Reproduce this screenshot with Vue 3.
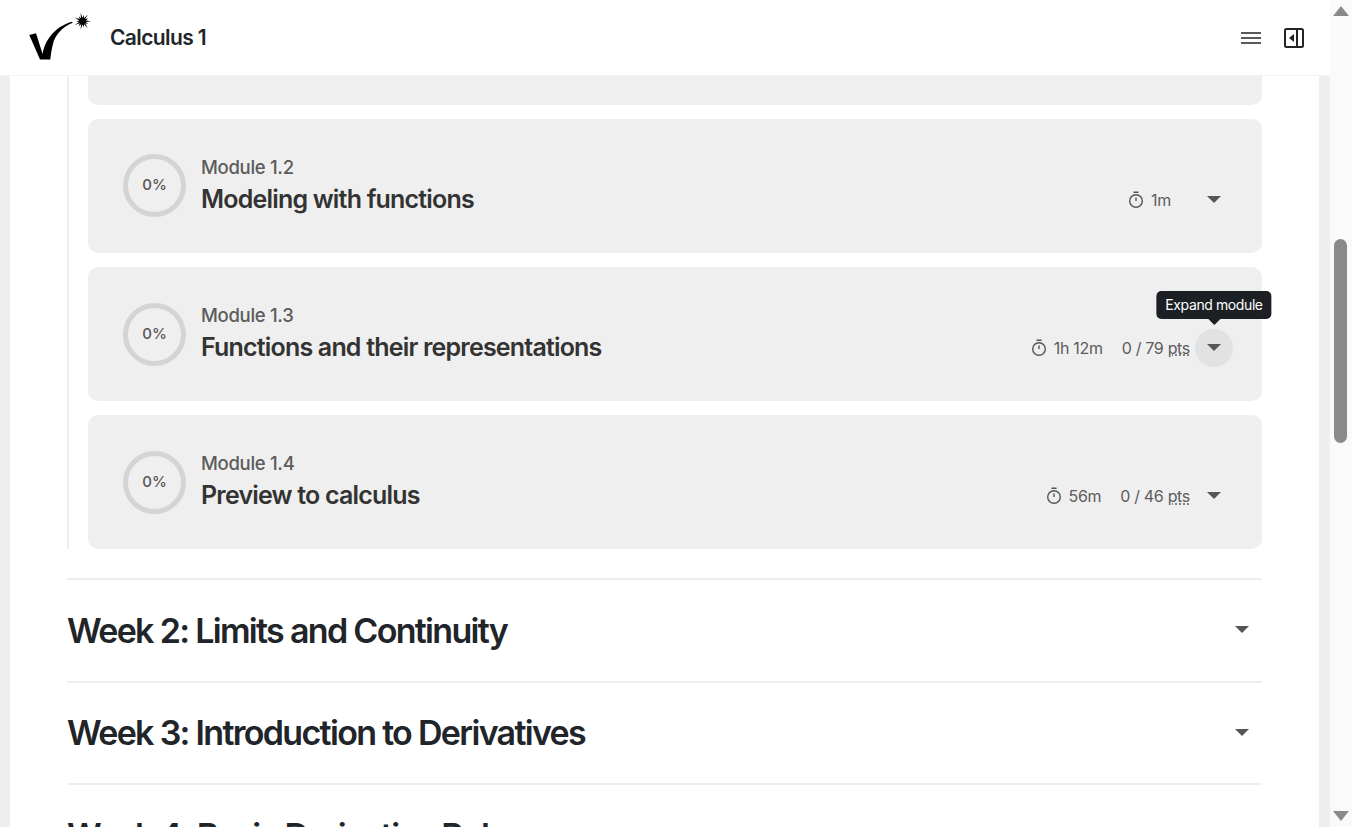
<script setup>
const modules = [
  { id: '1.2', title: 'Modeling with functions', time: '1m', pts: '' },
  { id: '1.3', title: 'Functions and their representations', time: '1h 12m', pts: '0 / 79', hover: true },
  { id: '1.4', title: 'Preview to calculus', time: '56m', pts: '0 / 46' }
]
const weeks = ['Week 2: Limits and Continuity', 'Week 3: Introduction to Derivatives', 'Week 4: Basic Derivative Rules']
const star = Array.from({ length: 28 }, (_, i) => {
  const a = (i * Math.PI) / 14
  const r = i % 2 ? 3.4 : (i % 4 ? 6.4 : 8.6)
  return `${(53.5 + r * Math.cos(a)).toFixed(2)},${(8.2 + r * Math.sin(a)).toFixed(2)}`
}).join(' ')
</script>

<template>
  <div class="page">
    <div class="main">
      <header class="topbar">
        <svg class="logo" width="62" height="50" viewBox="0 0 62 50">
          <path d="M0.3 22 L7 20.3 L13.6 41 C15.5 29 24 14 43 8.7 L43.7 9.7 C33 14 27 22 24.8 28 C23 34 22 40 21.3 46.5 L11 46.5 Z" fill="#000"/>
          <polygon :points="star" fill="#000"/>
        </svg>
        <span class="course">Calculus 1</span>
        <div class="actions">
          <svg width="20" height="14" viewBox="0 0 20 14" fill="none" stroke="#212529" stroke-width="1.6">
            <path d="M0 2h20M0 7h20M0 12h20"/>
          </svg>
          <svg width="20" height="20" viewBox="0 0 20 20" fill="none">
            <rect x="1" y="1" width="18" height="18" rx="1.5" stroke="#212529" stroke-width="2"/>
            <path d="M13 1v18" stroke="#212529" stroke-width="2"/>
            <path d="M10 6v8L5 10Z" fill="#212529"/>
          </svg>
        </div>
      </header>
      <div class="sheet">
        <div class="content">
          <div class="modules">
            <div class="card-tail"></div>
            <article v-for="m in modules" :key="m.id" class="card">
              <div class="ring"><span>0%</span></div>
              <div class="info">
                <div class="label">Module {{ m.id }}</div>
                <h3>{{ m.title }}</h3>
              </div>
              <div class="meta">
                <span class="time">
                  <svg width="16" height="18" viewBox="0 0 16 18" fill="none" stroke="#555" stroke-width="1.4">
                    <circle cx="8" cy="10" r="6.3"/>
                    <path d="M5.5 1.2h5M8 6.5V10"/>
                  </svg>
                  {{ m.time }}
                </span>
                <span class="pts"><template v-if="m.pts">{{ m.pts }} <u>pts</u></template></span>
                <span class="toggle" :class="{ hover: m.hover }">
                  <i class="caret"></i>
                  <span v-if="m.hover" class="tip">Expand module</span>
                </span>
              </div>
            </article>
          </div>
          <section v-for="w in weeks" :key="w" class="week">
            <h2>{{ w }}</h2>
            <i class="caret"></i>
          </section>
        </div>
      </div>
    </div>
    <div class="scrollbar">
      <i class="arrow up"></i>
      <div class="track"><div class="thumb"></div></div>
      <i class="arrow down"></i>
    </div>
  </div>
</template>

<style>
html, body { margin: 0; overflow: hidden; }
</style>

<style scoped>
.page {
  display: flex;
  width: 1352px;
  height: 827px;
  overflow: hidden;
  font-family: Inter, "Liberation Sans", sans-serif;
  color: #212529;
}
.main {
  width: 1330px;
  display: flex;
  flex-direction: column;
  background: #eee;
}
.topbar {
  flex: none;
  height: 76px;
  box-sizing: border-box;
  display: flex;
  align-items: center;
  background: #fff;
  border-bottom: 1px solid #f3f3f3;
  padding: 0 26px 0 29px;
}
.course {
  margin-left: 19px;
  font-size: 21px;
  font-weight: 600;
  letter-spacing: -0.62px;
}
.actions {
  margin-left: auto;
  display: flex;
  align-items: center;
  gap: 24px;
  margin-right: 0;
}
.actions svg:first-child { margin-right: -1px; }
.sheet {
  flex: 1;
  min-height: 0;
  margin: 0 11px 0 10px;
  background: #fff;
  overflow: hidden;
}
.content { padding: 0 57px; }
.modules {
  border-left: 2px solid #eee;
  padding: 0 0 0 19px;
  display: flex;
  flex-direction: column;
  gap: 14.3px;
}
.card-tail {
  height: 28.5px;
  background: #efefef;
  border-radius: 0 0 10px 10px;
}
.card {
  height: 134px;
  box-sizing: border-box;
  background: #efefef;
  border-radius: 10px;
  display: flex;
  align-items: center;
  padding: 0 29px 0 35px;
}
.ring {
  width: 63px;
  height: 63px;
  box-sizing: border-box;
  border: 5px solid #d4d4d4;
  border-radius: 50%;
  display: flex;
  align-items: center;
  justify-content: center;
  font-size: 15px;
  font-weight: 500;
  color: #555;
  margin-top: -0.2px;
}
.ring span { margin-top: -1.5px; }
.info { margin-left: 15px; }
.label {
  font-size: 18.5px;
  line-height: 22px;
  font-weight: 500;
  letter-spacing: -0.3px;
  color: #5c5c5c;
}
h3 {
  margin: 4.8px 0 0;
  font-size: 25px;
  line-height: 33px;
  font-weight: 600;
  letter-spacing: -0.81px;
  color: #333;
}
.meta {
  margin-left: auto;
  margin-top: 28px;
  display: flex;
  align-items: center;
  font-size: 16px;
  letter-spacing: -0.32px;
  color: #5c5c5c;
}
.time { display: flex; align-items: center; gap: 7px; }
.pts { margin-left: 19px; }
.pts u { text-decoration: underline dotted; text-underline-offset: 1px; }
.toggle {
  position: relative;
  width: 38px;
  height: 38px;
  margin-left: 5px;
  border-radius: 50%;
  display: flex;
  align-items: center;
  justify-content: center;
}
.toggle.hover { background: #e2e2e2; }
.toggle .caret { margin-top: -1px; }
.caret {
  display: block;
  width: 0;
  height: 0;
  border-left: 7px solid transparent;
  border-right: 7px solid transparent;
  border-top: 7px solid #555;
}
.tip {
  position: absolute;
  left: 50%;
  bottom: 48px;
  transform: translateX(-50%);
  white-space: nowrap;
  padding: 0 9px;
  height: 28px;
  line-height: 28px;
  border-radius: 5px;
  background: #1c1f23;
  color: #fff;
  font-size: 14px;
  letter-spacing: -0.4px;
}
.tip::after {
  content: "";
  position: absolute;
  left: 50%;
  bottom: -6px;
  margin-left: -6px;
  border-left: 6px solid transparent;
  border-right: 6px solid transparent;
  border-top: 6px solid #1c1f23;
}
.week {
  height: 102.3px;
  box-sizing: border-box;
  border-top: 2px solid #eee;
  display: flex;
  align-items: center;
  justify-content: space-between;
  padding-right: 13px;
}
.week .caret { margin-top: -1.4px; }
.week:first-of-type { margin-top: 29px; }
h2 {
  margin: 0;
  font-size: 34px;
  font-weight: 600;
  letter-spacing: -1.69px;
  color: #212529;
}
.scrollbar {
  width: 22px;
  flex: none;
  background: #fafafa;
  display: flex;
  flex-direction: column;
  align-items: center;
  position: relative;
}
.track { flex: 1; width: 100%; position: relative; }
.thumb {
  position: absolute;
  top: 217px;
  left: 4px;
  width: 13px;
  height: 204px;
  border-radius: 7px;
  background: #8a8a8a;
}
.arrow {
  flex: none;
  width: 0;
  height: 0;
  border-left: 8px solid transparent;
  border-right: 8px solid transparent;
  margin: 6px 0;
}
.arrow.up { border-bottom: 10px solid #8a8a8a; }
.arrow.down { border-top: 10px solid #8a8a8a; }
</style>
